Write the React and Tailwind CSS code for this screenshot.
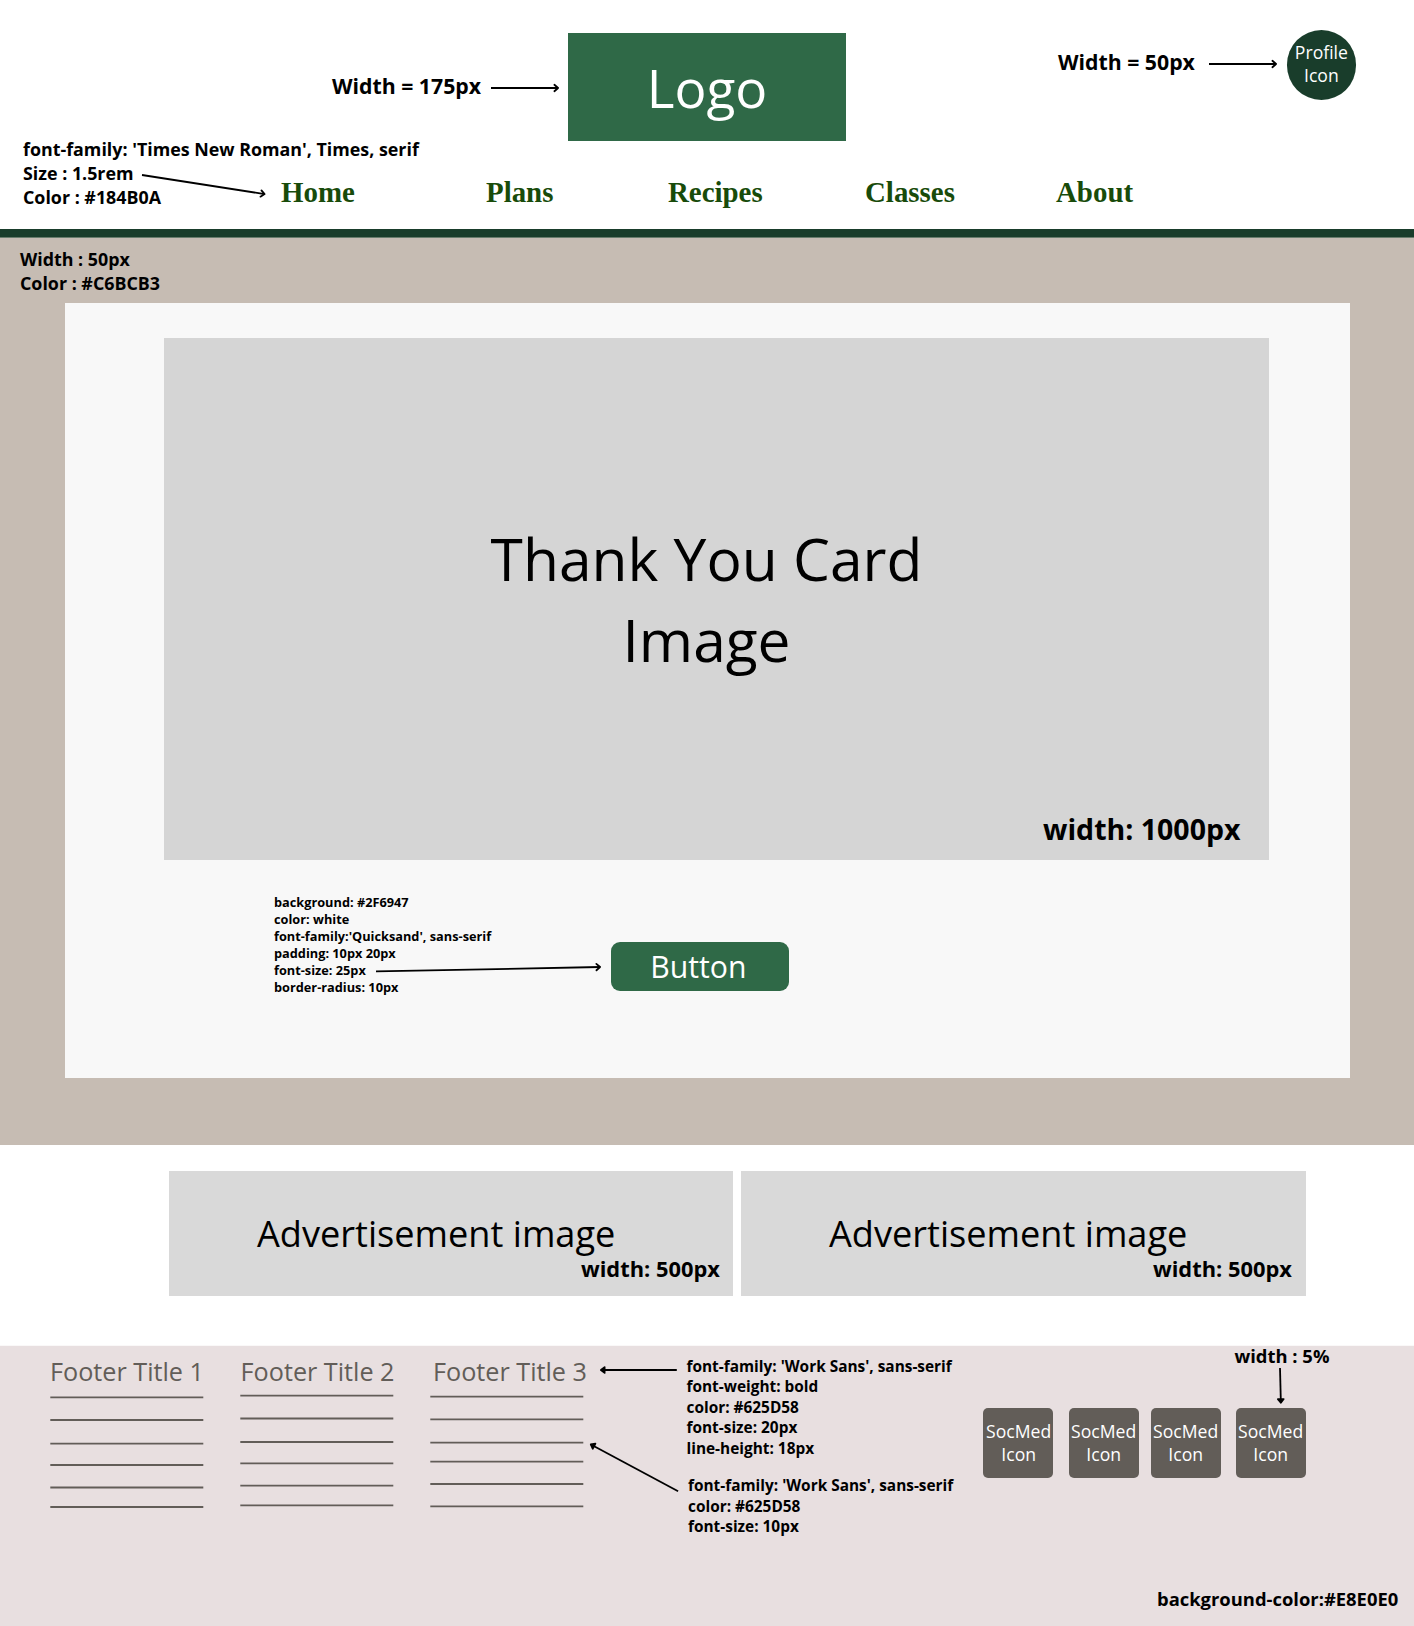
const NOTE = "absolute whitespace-nowrap font-bold text-black";

function Arrow({ x1, y1, x2, y2, solid }) {
  const left = Math.min(x1, x2) - 8;
  const top = Math.min(y1, y2) - 8;
  const width = Math.abs(x2 - x1) + 16;
  const height = Math.abs(y2 - y1) + 16;
  const angle = (Math.atan2(y2 - y1, x2 - x1) * 180) / Math.PI;
  const length = Math.hypot(x2 - x1, y2 - y1);
  return (
    <svg
      className="absolute overflow-visible"
      style={{ left, top, width, height }}
      fill="none"
      stroke="black"
      strokeWidth="1.8"
      strokeLinecap="round"
      strokeLinejoin="round"
    >
      <g transform={`translate(${x1 - left} ${y1 - top}) rotate(${angle})`}>
        <path d={`M0 0H${length - 1}`} strokeLinecap="butt" />
        {solid ? (
          <path
            d={`M${length - 4.6} -2.9L${length - 0.9} 0L${length - 4.6} 2.9Z`}
            fill="black"
          />
        ) : (
          <path d={`M${length - 4.6} -3.2L${length - 0.9} 0L${length - 4.6} 3.2`} />
        )}
      </g>
    </svg>
  );
}

function Header() {
  return (
    <header className="relative flex h-[238px] flex-col border-b border-[#687d6d] bg-white">
      <div className="mt-[33px] ml-[568px] flex h-[108px] w-[278px] items-center justify-center bg-[#2f6947] pt-[2px] text-[53.2px] leading-none text-white">
        Logo
      </div>
      <nav className="mt-[35px] grid h-[53px] grid-cols-[205px_182px_197px_191px_auto] pl-[281px] font-['Liberation_Serif',serif] text-[28.9px] leading-8 font-bold text-[#184b0a]">
        <a>Home</a>
        <a>Plans</a>
        <a>Recipes</a>
        <a>Classes</a>
        <a>About</a>
      </nav>
      <div className="h-2 bg-[#193d2b]" />

      <div className="absolute top-[30.1px] left-[1286.6px] flex h-[69.6px] w-[69.6px] flex-col items-center rounded-full bg-[#193d2b] pt-[11px] text-[17.6px] leading-[23px] text-white">
        <span>Profile</span>
        <span>Icon</span>
      </div>
      <p className={`${NOTE} top-[71px] left-[332px] text-[21.25px] leading-[30px]`}>Width = 175px</p>
      <Arrow x1={491} y1={88} x2={559} y2={88} />
      <p className={`${NOTE} top-[47px] left-[1058px] text-[21.25px] leading-[30px]`}>Width = 50px</p>
      <Arrow x1={1209} y1={63.8} x2={1277} y2={63.8} />
      <p className={`${NOTE} top-[137px] left-[23px] text-[17.85px] leading-[24.1px]`}>
        font-family: 'Times New Roman', Times, serif
        <br />
        Size : 1.5rem
        <br />
        Color : #184B0A
      </p>
      <Arrow x1={142} y1={175.3} x2={265.5} y2={194.5} />
    </header>
  );
}

function ThankYou() {
  return (
    <main className="relative h-[907px] bg-[#c6bcb3] px-[65px] pt-[65px]">
      <p className={`${NOTE} top-[9px] left-[20px] text-[17.85px] leading-[24.1px]`}>
        Width : 50px
        <br />
        Color : #C6BCB3
      </p>
      <section className="relative h-[775px] w-[1285px] bg-[#f8f8f8] pt-[35px] pl-[99px]">
        <div className="relative h-[522px] w-[1105px] bg-[#d5d5d5] pt-[180px] pr-[20px] text-center text-[58.7px] leading-[80.9px] text-black">
          Thank You Card
          <br />
          Image
          <p className={`${NOTE} top-[471px] left-[879px] text-[28.5px] leading-[40px]`}>width: 1000px</p>
        </div>
        <button className="mt-[82.4px] ml-[446.7px] flex h-[48.4px] w-[178.3px] items-center justify-center rounded-[9px] bg-[#2f6947] pt-[1.5px] pr-[3px] text-[30.2px] leading-none text-white">
          Button
        </button>
        <p className={`${NOTE} top-[591px] left-[209px] text-[12.75px] leading-[17.07px]`}>
          background: #2F6947
          <br />
          color: white
          <br />
          font-family:'Quicksand', sans-serif
          <br />
          padding: 10px 20px
          <br />
          font-size: 25px
          <br />
          border-radius: 10px
        </p>
        <Arrow x1={311} y1={668.6} x2={536} y2={664.2} />
      </section>
    </main>
  );
}

function Advertisement() {
  return (
    <div className="relative h-[125px] bg-[#d9d9d9] pt-[37px] pl-[88px] text-[36.15px] leading-[50px] text-black">
      Advertisement image
      <p className={`${NOTE} top-[83px] left-[412px] text-[21.85px] leading-[30px]`}>width: 500px</p>
    </div>
  );
}

const COLUMNS = [
  { title: "Footer Title 1", lines: [51.3, 74, 97.6, 119, 141.5, 161] },
  { title: "Footer Title 2", lines: [49.7, 72.5, 96, 117.3, 139.7, 159.3] },
  { title: "Footer Title 3", lines: [50.7, 73.3, 96.7, 115.7, 138, 160.3] },
];

function FooterColumn({ title, lines, indent }) {
  return (
    <div className="relative w-[153px]">
      <h2 className={`${indent} pt-2 text-[25.2px] leading-[34px] whitespace-nowrap`}>{title}</h2>
      <svg className="absolute top-0 left-0 h-[170px] w-[154px]" stroke="#625d58" strokeWidth="1.8">
        {lines.map((y) => (
          <path key={y} d={`M0.3 ${y}H153.3`} />
        ))}
      </svg>
    </div>
  );
}

function SocialIcon({ indent }) {
  return (
    <div
      className={`${indent} flex h-[70px] w-[70px] flex-col items-center rounded-[5px] bg-[#625d58] pt-[12px] text-[17.6px] leading-[23px] text-white`}
    >
      <span>SocMed</span>
      <span>Icon</span>
    </div>
  );
}

function Footer() {
  return (
    <footer className="relative flex h-[281px] border-t border-[#faf8f8] bg-[#e8dfe0] pl-[50px] text-[#625d58]">
      <div className="flex gap-[37px]">
        <FooterColumn {...COLUMNS[0]} indent="pl-0" />
        <FooterColumn {...COLUMNS[1]} indent="pl-[0.6px]" />
        <FooterColumn {...COLUMNS[2]} indent="pl-[3px]" />
      </div>
      <div className="mt-[61.6px] ml-[399.7px] grid grid-cols-[86px_82px_85px_70px] items-start">
        <SocialIcon indent="pl-0.5" />
        <SocialIcon indent="pl-0" />
        <SocialIcon indent="pl-0" />
        <SocialIcon indent="pl-0" />
      </div>
      <p className={`${NOTE} top-[10.8px] left-[686.5px] text-[15.4px] leading-[20.5px]`}>
        font-family: 'Work Sans', sans-serif
        <br />
        font-weight: bold
        <br />
        color: #625D58
        <br />
        font-size: 20px
        <br />
        line-height: 18px
      </p>
      <p className={`${NOTE} top-[130px] left-[688px] text-[15.4px] leading-[20.5px]`}>
        font-family: 'Work Sans', sans-serif
        <br />
        color: #625D58
        <br />
        font-size: 10px
      </p>
      <Arrow x1={677} y1={24.3} x2={600.2} y2={24.3} solid />
      <Arrow x1={678.5} y1={145} x2={590.4} y2={97.8} solid />
      <p className={`${NOTE} top-[-2px] left-[1234.5px] text-[18.4px] leading-[24px]`}>width : 5%</p>
      <Arrow x1={1280.3} y1={21.5} x2={1281.2} y2={57.2} solid />
      <p className={`${NOTE} top-[241px] left-[1157px] text-[18.4px] leading-[24px]`}>
        background-color:#E8E0E0
      </p>
    </footer>
  );
}

export default function App() {
  return (
    <div className="h-[1626px] w-[1414px] overflow-hidden bg-white font-['Open_Sans',sans-serif]">
      <Header />
      <ThankYou />
      <div className="grid h-[200px] grid-cols-[564px_565px] items-start gap-2 pt-[26px] pl-[169px]">
        <Advertisement />
        <Advertisement />
      </div>
      <Footer />
    </div>
  );
}
